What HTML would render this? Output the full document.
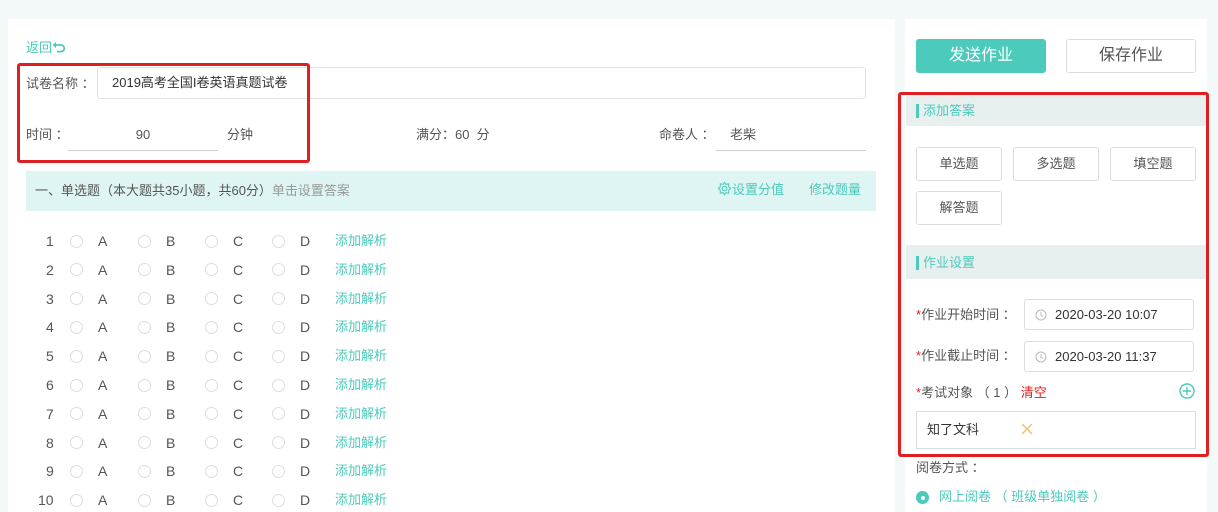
<!DOCTYPE html>
<html><head><meta charset="utf-8"><style>
*{margin:0;padding:0;box-sizing:border-box}
body{width:1218px;height:512px;overflow:hidden;background:#f3f8f8;font-family:"Liberation Sans","Noto Sans CJK SC",sans-serif;font-size:13px;color:#555;position:relative;line-height:18px}
.a{position:absolute;white-space:nowrap;line-height:18px}
.g{color:#4ccabb}
.r{position:absolute;width:13px;height:13px;border:1px solid #ddd;border-radius:50%}
.btn{position:absolute;border:1px solid #ddd;border-radius:3px;background:#fff;text-align:center;color:#555}
</style></head><body>
<div class="a" style="left:8px;top:19px;width:887px;height:493px;background:#fff"></div>
<div class="a" style="left:905px;top:19px;width:302px;height:493px;background:#fff"></div>

<div class="a g" style="left:26px;top:39px">返回<svg width="14" height="14" viewBox="0 0 14 14" style="vertical-align:-2px"><path d="M4 2 L0.5 5 L4 8 Z" fill="#4ccabb"/><path d="M3 5 H9 A3.3 3.3 0 0 1 9 11.6 H5" fill="none" stroke="#4ccabb" stroke-width="1.8"/></svg></div>
<div class="a" style="left:26px;top:75px">试卷名称 ：</div>
<div class="a" style="left:97px;top:67px;width:769px;height:32px;border:1px solid #e3e3e3;border-radius:3px;padding:6px 14px;color:#333">2019高考全国I卷英语真题试卷</div>
<div class="a" style="left:26px;top:126px">时间 ：</div>
<div class="a" style="left:68px;top:120px;width:150px;height:31px;border-bottom:1px solid #ccc;text-align:center;padding-top:6px">90</div>
<div class="a" style="left:227px;top:126px">分钟</div>
<div class="a" style="left:416px;top:126px">满分：60&nbsp;&nbsp;分</div>
<div class="a" style="left:659px;top:126px">命卷人 ：</div>
<div class="a" style="left:716px;top:120px;width:150px;height:31px;border-bottom:1px solid #ccc;padding:6px 0 0 14px">老柴</div>
<div class="a" style="left:17px;top:63px;width:293px;height:100px;border:3px solid #e02020;border-radius:3px"></div>

<div class="a" style="left:26px;top:171px;width:850px;height:40px;background:#dff5f3"></div>
<div class="a" style="left:35px;top:182px">一、单选题（本大题共35小题，共60分）<span style="color:#999">单击设置答案</span></div>
<div class="a g" style="left:717px;top:181px"><svg width="15" height="15" viewBox="0 0 16 16" style="vertical-align:-2px"><circle cx="8" cy="8" r="2.5" fill="none" stroke="#4ccabb" stroke-width="1.2"/><path d="M8 1.5 L9.5 3.5 L12.5 3 L12.5 6 L14.5 8 L12.5 10 L12.5 13 L9.5 12.5 L8 14.5 L6.5 12.5 L3.5 13 L3.5 10 L1.5 8 L3.5 6 L3.5 3 L6.5 3.5 Z" fill="none" stroke="#4ccabb" stroke-width="1.1"/></svg>设置分值</div>
<div class="a g" style="left:809px;top:181px">修改题量</div>

<div id="rows"></div>

<div class="a" style="left:916px;top:39px;width:130px;height:34px;background:#4ccabb;border-radius:3px;color:#fff;font-size:16px;text-align:center;line-height:34px">发送作业</div>
<div class="btn" style="left:1066px;top:39px;width:130px;height:34px;font-size:16px;line-height:32px">保存作业</div>

<div class="a" style="left:906px;top:95px;width:300px;height:31px;background:#e8f0ef"></div>
<div class="a" style="left:916px;top:104px;width:3px;height:14px;background:#4ccabb"></div>
<div class="a g" style="left:923px;top:102px">添加答案</div>
<div class="btn" style="left:916px;top:147px;width:86px;height:34px;line-height:32px">单选题</div>
<div class="btn" style="left:1013px;top:147px;width:86px;height:34px;line-height:32px">多选题</div>
<div class="btn" style="left:1110px;top:147px;width:86px;height:34px;line-height:32px">填空题</div>
<div class="btn" style="left:916px;top:191px;width:86px;height:34px;line-height:32px">解答题</div>
<div class="a" style="left:906px;top:245px;width:300px;height:34px;background:#e8f0ef"></div>
<div class="a" style="left:916px;top:256px;width:3px;height:14px;background:#4ccabb"></div>
<div class="a g" style="left:923px;top:254px">作业设置</div>

<div class="a" style="left:916px;top:306px"><span style="color:#e02020">*</span>作业开始时间 ：</div>
<div class="a" style="left:1024px;top:299px;width:170px;height:31px;border:1px solid #ddd;border-radius:3px;padding:6px 0 0 30px;color:#333">2020-03-20 10:07</div>
<div class="a" style="left:916px;top:347px"><span style="color:#e02020">*</span>作业截止时间 ：</div>
<div class="a" style="left:1024px;top:341px;width:170px;height:31px;border:1px solid #ddd;border-radius:3px;padding:6px 0 0 30px;color:#333">2020-03-20 11:37</div>
<svg class="a" style="left:1035px;top:309px" width="12" height="12" viewBox="0 0 12 12"><circle cx="6" cy="6" r="5" fill="none" stroke="#bbb"/><path d="M6 3V6.3L8 7.5" fill="none" stroke="#bbb"/></svg>
<svg class="a" style="left:1035px;top:351px" width="12" height="12" viewBox="0 0 12 12"><circle cx="6" cy="6" r="5" fill="none" stroke="#bbb"/><path d="M6 3V6.3L8 7.5" fill="none" stroke="#bbb"/></svg>
<div class="a" style="left:916px;top:384px"><span style="color:#e02020">*</span>考试对象 （ 1 ） <span style="color:#e02020">清空</span></div>
<svg class="a" style="left:1179px;top:383px" width="16" height="16" viewBox="0 0 16 16"><circle cx="8" cy="8" r="7" fill="none" stroke="#4ccabb" stroke-width="1.4"/><path d="M8 4V12M4 8H12" stroke="#4ccabb" stroke-width="1.4"/></svg>
<div class="a" style="left:916px;top:411px;width:280px;height:38px;border:1px solid #ddd;padding:9px 0 0 10px;color:#333">知了文科</div>
<svg class="a" style="left:1021px;top:423px" width="12" height="12" viewBox="0 0 12 12"><path d="M1 1L11 11M11 1L1 11" stroke="#f0c070" stroke-width="1.5"/></svg>
<div class="a" style="left:898px;top:92px;width:311px;height:365px;border:3px solid #e02020;border-radius:3px"></div>

<div class="a" style="left:916px;top:459px">阅卷方式 ：</div>
<div class="a" style="left:916px;top:491px;width:13px;height:13px;border-radius:50%;background:#4ccabb"></div>
<div class="a" style="left:920.5px;top:495.5px;width:4px;height:4px;border-radius:50%;background:#fff"></div>
<div class="a g" style="left:939px;top:488px">网上阅卷 （ 班级单独阅卷 ）</div>

<script>
var h='';for(var i=0;i<10;i++){var c=241+i*28.8;
h+='<div class="a" style="left:'+(i==9?38:46)+'px;top:'+(c-9)+'px;font-size:14px">'+(i+1)+'</div>';
[70,138,205,272].forEach(function(x,j){h+='<div class="r" style="left:'+x+'px;top:'+(c-6.5)+'px"></div><div class="a" style="left:'+(x+28)+'px;top:'+(c-9)+'px;font-size:14px">'+'ABCD'[j]+'</div>';});
h+='<div class="a g" style="left:335px;top:'+(c-9)+'px">添加解析</div>';}
document.getElementById('rows').innerHTML=h;
</script>
</body></html>
